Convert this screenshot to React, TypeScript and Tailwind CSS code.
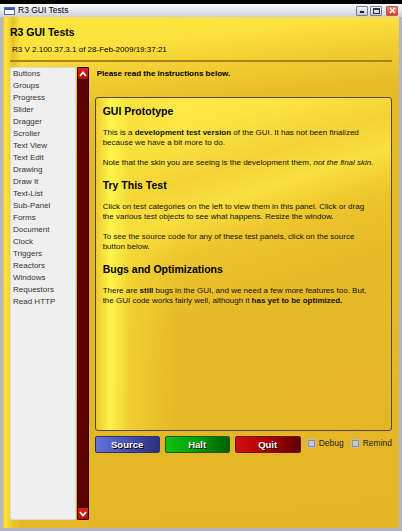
const items = [
  "Buttons",
  "Groups",
  "Progress",
  "Slider",
  "Dragger",
  "Scroller",
  "Text View",
  "Text Edit",
  "Drawing",
  "Draw It",
  "Text-List",
  "Sub-Panel",
  "Forms",
  "Document",
  "Clock",
  "Triggers",
  "Reactors",
  "Windows",
  "Requestors",
  "Read HTTP",
];

function Caret({ down }: { down?: boolean }) {
  return (
    <svg width="8" height="6" viewBox="0 0 8 6" className={down ? "rotate-180" : ""}>
      <polyline points="1,5 4,1.5 7,5" fill="none" stroke="#fff" strokeWidth="1.8" />
    </svg>
  );
}

function Check({ label }: { label: string }) {
  return (
    <div className="flex items-center">
      <div className="w-[9px] h-[9px] border border-[#bdbdbd] bg-[#8f8f8f] flex items-center justify-center">
        <div className="w-[5px] h-[5px] bg-[#c9c9c9]" />
      </div>
      <span className="ml-[3px] text-[8.5px] leading-[10px] text-[#222]">{label}</span>
    </div>
  );
}

export default function App() {
  return (
    <div className="w-[402px] h-[531px] bg-black pt-[4px] flex flex-col overflow-hidden font-['Liberation_Sans',Arial,sans-serif] text-[#111]">
      {/* window title bar */}
      <div className="h-[13px] flex items-center pl-[4px] pr-[4px] bg-[linear-gradient(#fafafd,#e6e6ee_50%,#cfcfda)]">
        <div className="w-[11px] h-[8px] border border-[#5a6e9a] bg-white">
          <div className="h-[2px] bg-[#2a58c8]" />
        </div>
        <span className="ml-[3px] text-[8.5px] leading-none text-black">R3 GUI Tests</span>
        <div className="ml-auto flex items-center gap-[2px]">
          <div className="w-[12px] h-[10px] rounded-[1px] border border-[#7a7c96] bg-[linear-gradient(#f4f4fa,#c4c6d6)] flex items-end justify-center pb-[2px]">
            <div className="w-[4px] h-[2px] bg-[#222]" />
          </div>
          <div className="w-[12px] h-[10px] rounded-[1px] border border-[#7a7c96] bg-[linear-gradient(#f4f4fa,#c4c6d6)] flex items-center justify-center">
            <div className="w-[7px] h-[6px] border border-[#333] border-t-2" />
          </div>
          <div className="ml-[2px] w-[12px] h-[10px] rounded-[1px] border border-[#b8584a] bg-[linear-gradient(#f08a70,#d8402a)] flex items-center justify-center">
            <svg width="7" height="7" viewBox="0 0 7 7">
              <path d="M1 1L6 6M6 1L1 6" stroke="#fff" strokeWidth="1.6" />
            </svg>
          </div>
        </div>
      </div>

      {/* window body */}
      <div className="flex-1 flex flex-col border-x-[3px] border-b-[3px] border-[#b4b6c8] bg-[linear-gradient(90deg,#eccb2e_0px,#fbe63c_3px,#eac22a_10px,rgba(229,184,38,0)_18px),linear-gradient(174deg,#ffe83e_0%,#fde23e_7%,#f2cf32_12%,#e8bd28_19%,#e5b826_30%,#e4b626_100%)]">
        <div className="pl-[7px] pt-[8px]">
          <div className="text-[10.5px] leading-[14px] font-bold text-black">R3 GUI Tests</div>
          <div className="mt-[6px] pl-[2px] text-[8px] leading-[10px] text-black">
            R3 V 2.100.37.3.1 of 28-Feb-2009/19:37:21
          </div>
        </div>
        <div className="mx-[7px] mt-[5px] h-[2px] bg-[#a3841e]" />

        <div className="flex-1 flex mt-[5px] pb-[8px] pl-[7px] pr-[7px]">
          {/* category list */}
          <div className="w-[66px] bg-[#efefef] border border-[#dcdcdc] rounded-[2px] pl-[2px]">
            {items.map((it) => (
              <div key={it} className="text-[8px] leading-[12px] text-[#333]">
                {it}
              </div>
            ))}
          </div>

          {/* scroller */}
          <div className="ml-[1px] w-[12px] flex flex-col bg-[#5e0000] border border-[#2c0000] rounded-[1px]">
            <div className="h-[12px] bg-[linear-gradient(#e02020,#b00808)] border-b border-[#3a0000] rounded-[1px] flex items-center justify-center">
              <Caret />
            </div>
            <div className="flex-1" />
            <div className="h-[12px] bg-[linear-gradient(#e02020,#b00808)] border-t border-[#3a0000] rounded-[1px] flex items-center justify-center">
              <Caret down />
            </div>
          </div>

          {/* right side */}
          <div className="ml-[6px] flex-1 flex flex-col">
            <div className="mt-[2px] pl-[2px] text-[8px] leading-[10px] font-bold text-black">
              Please read the instructions below.
            </div>

            <div className="mt-[18px] h-[334px] border border-[#4e4a38] rounded-[3px] pl-[7px] pt-[6px] whitespace-nowrap text-[8px] leading-[10px] text-[#111] bg-[linear-gradient(90deg,rgba(236,200,46,0.9)_0px,rgba(255,246,76,0.95)_14px,rgba(246,220,56,0.6)_34px,rgba(229,184,38,0)_80px),linear-gradient(162deg,#ffec48_0%,#fde644_14%,#f3d236_26%,#fae040_34%,#ecc42c_44%,#e6ba27_60%,#e4b626_100%)]">
              <div className="text-[10.5px] leading-[14px] font-bold text-black">GUI Prototype</div>
              <p className="mt-[10px]">
                This is a <b>development test version</b> of the GUI. It has not been finalized
                <br />
                because we have a bit more to do.
              </p>
              <p className="mt-[10px]">
                Note that the skin you are seeing is the development them, <i>not the final skin</i>.
              </p>
              <div className="mt-[10px] text-[10.5px] leading-[14px] font-bold text-black">Try This Test</div>
              <p className="mt-[10px]">
                Click on test categories on the left to view them in this panel. Click or drag
                <br />
                the various test objects to see what happens. Resize the window.
              </p>
              <p className="mt-[10px]">
                To see the source code for any of these test panels, click on the source
                <br />
                button below.
              </p>
              <div className="mt-[10px] text-[10.5px] leading-[14px] font-bold text-black">Bugs and Optimizations</div>
              <p className="mt-[10px]">
                There are <b>still</b> bugs in the GUI, and we need a few more features too. But,
                <br />
                the GUI code works fairly well, although it <b>has yet to be optimized.</b>
              </p>
            </div>

            <div className="mt-[5px] flex items-start">
              <button className="w-[65px] h-[17px] rounded-[2px] border border-[#2c3070] bg-[linear-gradient(100deg,#6474dc,#4650b4_50%,#2a3078)] text-white text-[9.5px] font-bold leading-none [text-shadow:1px_1px_0_#000]">
                Source
              </button>
              <button className="ml-[5px] w-[65px] h-[17px] rounded-[2px] border border-[#185a18] bg-[linear-gradient(100deg,#14c014,#04a004_50%,#005a00)] text-white text-[9.5px] font-bold leading-none [text-shadow:1px_1px_0_#000]">
                Halt
              </button>
              <button className="ml-[5px] w-[66px] h-[17px] rounded-[2px] border border-[#601818] bg-[linear-gradient(100deg,#d01010,#b00000_50%,#5a0000)] text-white text-[9.5px] font-bold leading-none [text-shadow:1px_1px_0_#000]">
                Quit
              </button>
              <div className="ml-[6px] mt-[2px]">
                <Check label="Debug" />
              </div>
              <div className="ml-[7px] mt-[2px]">
                <Check label="Remind" />
              </div>
            </div>
          </div>
        </div>
      </div>
    </div>
  );
}
